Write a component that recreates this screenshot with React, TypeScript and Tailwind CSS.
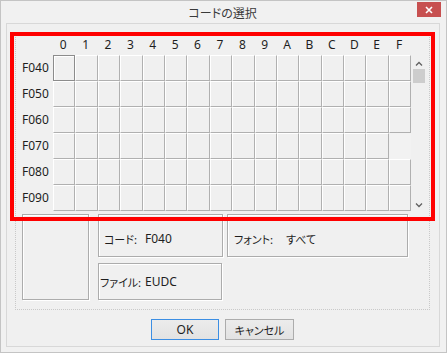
const COLS = ['0', '1', '2', '3', '4', '5', '6', '7', '8', '9', 'A', 'B', 'C', 'D', 'E', 'F'];
const ROWS = ['F040', 'F050', 'F060', 'F070', 'F080', 'F090'];

const Chevron = ({ up }: { up?: boolean }) => (
  <svg width="8" height="5" viewBox="0 0 8 5" className="block">
    <path
      d={up ? 'M1 4.5 L4 1.5 L7 4.5' : 'M1 0.5 L4 3.5 L7 0.5'}
      fill="none"
      stroke="#606060"
      strokeWidth="1.3"
    />
  </svg>
);

const Cell = ({ selected, flat }: { selected?: boolean; flat?: boolean }) => {
  if (selected) {
    return <div className="h-[26px] border border-[#8c8c8c] shadow-[inset_1px_1px_0_#fff] bg-[#f0f0f0]" />;
  }
  if (flat) {
    return <div className="h-[26px] bg-[#f2f2f2]" />;
  }
  return (
    <div className="h-[26px] border border-t-white border-l-white border-r-[#b0b0b0] border-b-[#b0b0b0] bg-[#f0f0f0]" />
  );
};

const Etched = ({ className, children }: { className: string; children?: React.ReactNode }) => (
  <div className={`border border-[#acacac] shadow-[inset_1px_1px_0_#fff,1px_1px_0_#fff] ${className}`}>{children}</div>
);

// proportional kana so the Japanese labels are as narrow as Meiryo UI
const jp = "font-['Noto_Sans_CJK_JP',sans-serif] text-[11px] [font-feature-settings:'palt']";

export default function App() {
  return (
    <div className="relative w-[447px] h-[353px] bg-[#f1f1f1] border border-[#c4c4c4] font-['Noto_Sans','Noto_Sans_CJK_JP',sans-serif] text-[12px] text-[#1e1e1e] overflow-hidden">
      {/* title bar */}
      <div className="flex items-start h-[22px]">
        <div className="flex-1 pl-[27px] pt-[4px] text-center text-[12px] leading-[16px] text-[#3a3a3a] font-['Noto_Sans_CJK_JP',sans-serif] [font-feature-settings:'palt']">
          コードの選択
        </div>
        <div className="mt-[1px] mr-[5px] w-[24px] h-[15px] bg-[#c75050] flex items-center justify-center">
          <svg width="8" height="8" viewBox="0 0 8 8">
            <path d="M1 1 L7 7 M7 1 L1 7" stroke="#fff" strokeWidth="1.6" />
          </svg>
        </div>
      </div>

      {/* client area */}
      <div className="ml-[5px] w-[434px] h-[324px] bg-[#f0f0f0] border border-[#d8d8d8]">
        <div className="ml-[8px] mt-[9px] w-[415px] h-[277px] border border-dotted border-[#c9c9c9]">
          {/* header */}
          <div className="flex h-[21px] items-center">
            <div className="w-[37px]" />
            <div className="grid grid-cols-[repeat(16,22.4px)]">
              {COLS.map((c) => (
                <div key={c} className="text-center pr-[2px] leading-[14px]">
                  {c}
                </div>
              ))}
            </div>
          </div>

          {/* grid */}
          <div className="flex">
            <div className="w-[37px] pl-[6px]">
              {ROWS.map((r) => (
                <div key={r} className="h-[26px] flex items-center pb-[1px]">
                  {r}
                </div>
              ))}
            </div>
            <div className="grid grid-cols-[repeat(16,22.4px)]">
              {ROWS.map((r, ri) =>
                COLS.map((c, ci) => (
                  <Cell key={r + c} selected={ri === 0 && ci === 0} flat={ri === 3 && ci === 15} />
                ))
              )}
            </div>
            <div className="w-[15px] h-[156px] flex flex-col items-center pl-[1px]">
              <div className="mt-[6px]">
                <Chevron up />
              </div>
              <div className="mt-[3px] w-[12px] h-[14px] bg-[#cdcdcd]" />
              <div className="mt-auto mb-[3px]">
                <Chevron />
              </div>
            </div>
          </div>

          {/* info boxes */}
          <div className="flex mt-[3px]">
            <Etched className="ml-[6px] w-[67px] h-[86px]" />
            <div className="ml-[9px] flex flex-col">
              <div className="flex">
                <Etched className="w-[125px] h-[43px] pt-[17px] pl-[5px] flex">
                  <div className={`w-[41px] shrink-0 whitespace-nowrap leading-[14px] ${jp}`}>コード:</div>
                  <div className="leading-[14px]">F040</div>
                </Etched>
                <Etched className="ml-[4px] w-[181px] h-[43px] pt-[17px] pl-[6px] flex">
                  <div className={`w-[52px] shrink-0 whitespace-nowrap leading-[14px] ${jp}`}>フォント:</div>
                  <div className={`whitespace-nowrap leading-[14px] ${jp}`}>すべて</div>
                </Etched>
              </div>
              <Etched className="mt-[6px] w-[124px] h-[37px] pt-[11px] pl-[1px] flex">
                <div className={`w-[45px] shrink-0 whitespace-nowrap leading-[14px] ${jp}`}>ファイル:</div>
                <div className="leading-[14px]">EUDC</div>
              </Etched>
            </div>
          </div>
        </div>

        {/* buttons */}
        <div className="flex mt-[9px] pl-[144px] gap-[6px]">
          <button className="w-[68px] h-[21px] border border-[#3c8ee3] bg-gradient-to-b from-[#ececec] to-[#e2e2e2] text-[12px] leading-[14px]">
            OK
          </button>
          <button className={`w-[69px] h-[21px] border border-[#acacac] bg-gradient-to-b from-[#ececec] to-[#e2e2e2] leading-[14px] ${jp}`}>
            キャンセル
          </button>
        </div>
      </div>

      {/* red highlight overlay */}
      <div className="pointer-events-none absolute left-[9px] top-[31px] w-[425px] h-[189px] border-[4px] border-[#ff0000]" />
    </div>
  );
}
